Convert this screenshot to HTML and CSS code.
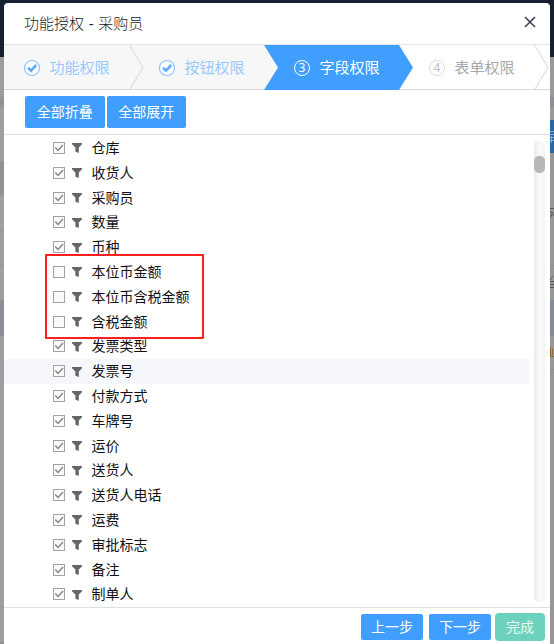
FILE: index.html
```html
<!DOCTYPE html>
<html lang="zh-CN">
<head>
    <meta charset="UTF-8">
    <meta name="viewport" content="width=device-width, initial-scale=1.0">
    <title>功能授权</title>
    <link rel="stylesheet" href="styles.css">
</head>
<body>
    <div class="backdrop">
        <div class="strip strip-left"></div>
        <div class="strip strip-right">
            <svg class="bit bit-button" width="4" height="14" viewBox="0 0 4 14"><path d="M0 1.5H4M0 4.5H4M0 7.5H4M0 10.5H4M1.5 6V13"/></svg>
            <svg class="bit bit-row" width="4" height="12" viewBox="0 0 4 12"><path d="M0 1.5H4M0 4L4 9M3 5L0 11"/></svg>
            <svg class="bit bit-edit" width="4" height="12" viewBox="0 0 4 12"><path d="M0 4L3 0M0 5.5H4M0 8.5H4M0 11.5H4"/></svg>
            <svg class="bit bit-more" width="4" height="10" viewBox="0 0 4 10"><path d="M0.5 0V10M0 9.5H4M2.5 2V8"/></svg>
        </div>
    </div>

    <div class="dialog">
        <header class="dialog-header">
            <h1>功能授权 - 采购员</h1>
            <button class="close" aria-label="关闭">
                <svg width="12" height="12" viewBox="0 0 12 12"><path d="M1 1L11 11M11 1L1 11"/></svg>
            </button>
        </header>

        <nav class="steps">
            <div class="step done first">
                <svg class="mark" width="18" height="18" viewBox="0 0 18 18"><circle cx="9" cy="9" r="7.5"/><path d="M5 8.8L8 11.6L13.2 6"/></svg>
                <span>功能权限</span>
                <svg class="arrow" width="15" height="45" viewBox="0 0 15 45"><path d="M0.5 0L14 22.5L0.5 45"/></svg>
            </div>
            <div class="step done before-active">
                <svg class="mark" width="18" height="18" viewBox="0 0 18 18"><circle cx="9" cy="9" r="7.5"/><path d="M5 8.8L8 11.6L13.2 6"/></svg>
                <span>按钮权限</span>
            </div>
            <div class="step active">
                <b class="num">3</b>
                <span>字段权限</span>
            </div>
            <div class="step todo">
                <b class="num">4</b>
                <span>表单权限</span>
                <svg class="arrow" width="15" height="45" viewBox="0 0 15 45"><path d="M0.5 0L14 22.5L0.5 45"/></svg>
            </div>
        </nav>

        <div class="toolbar">
            <button class="btn">全部折叠</button>
            <button class="btn">全部展开</button>
        </div>

        <div class="content">
            <ul class="fields" id="fields"></ul>
            <div class="scrollbar"><div class="thumb"></div></div>
            <div class="highlight"></div>
        </div>

        <footer class="dialog-footer">
            <button class="btn">上一步</button>
            <button class="btn">下一步</button>
            <button class="btn finish">完成</button>
        </footer>
    </div>

    <script src="fields.js"></script>
</body>
</html>
```

FILE: styles.css
```css
* {
    box-sizing: border-box;
}

body {
    margin: 0;
    height: 644px;
    overflow: hidden;
    padding: 3px 4px 0;
    font-family: "Liberation Sans", "Noto Sans CJK SC", sans-serif;
    font-size: 14px;
    color: #111;
}

button {
    font-family: inherit;
    border: none;
    padding: 0;
    cursor: pointer;
}

/* page behind the dialog */
.backdrop {
    position: absolute;
    top: 0;
    left: 0;
    width: 554px;
    height: 644px;
    z-index: -1;
    overflow: hidden;
    display: flex;
    justify-content: space-between;
    background: linear-gradient(#172030 57px, #9c9b99 57px);
}

.strip {
    position: relative;
    width: 12px;
}

.strip-left {
    background: linear-gradient(#172030 57px, #9f9e9c 57px, #9f9e9c 97px, #939396 97px, #939396 107px, #9f9e9c 107px, #9f9e9c 161px, #929295 161px, #929295 195px, #9f9e9c 195px, #9f9e9c 230px, #929292 230px, #929292 231px, #9f9e9c 231px, #9f9e9c 265px, #929292 265px, #929292 266px, #9f9e9c 266px, #9f9e9c 300px, #8a8f99 300px, #8a8f99 336px, #9f9e9c 336px, #9f9e9c 606px, #929292 606px, #929292 607px, #9f9e9c 607px, #9f9e9c 641px, #929292 641px);
}

.strip-right {
    background: linear-gradient(#172030 57px, #999 57px, #999 97px, #8f9093 97px, #8f9093 107px, #999 107px, #999 120px, #2866a8 120px, #2866a8 153px, #979797 153px, #979797 265px, #8c8c8c 265px, #8c8c8c 266px, #979797 266px, #979797 300px, #868c96 300px, #868c96 336px, #979797 336px, #979797 369px, #8c8c8c 369px, #8c8c8c 370px, #979797 370px);
}

.bit {
    position: absolute;
    right: 0;
    fill: none;
    stroke: #555;
}

.bit-button {
    top: 130px;
    stroke: #8fa6cc;
}

.bit-row {
    top: 207px;
}

.bit-edit {
    top: 276px;
}

.bit-more {
    top: 347px;
    stroke: #8b6534;
}

.dialog {
    width: 546px;
    height: 641px;
    display: flex;
    flex-direction: column;
    background: #fff;
    border-radius: 4px 4px 0 0;
}

.dialog-header {
    height: 42px;
    display: flex;
    align-items: center;
    justify-content: space-between;
    padding: 0 14px 0 20px;
    border-bottom: 1px solid #e4e6ea;
}

.dialog-header h1 {
    margin: 0;
    font-size: 15px;
    font-weight: 300;
    line-height: 22px;
    word-spacing: 0.5px;
    color: #222;
}

.close {
    width: 12px;
    height: 12px;
    background: none;
    margin-top: -3px;
}

.close svg {
    display: block;
    fill: none;
    stroke: #3d4050;
    stroke-width: 1.6;
}

/* steps */
.steps {
    height: 45px;
    display: flex;
    box-shadow: inset 0 -1px #d8dadd;
}

.step {
    position: relative;
    width: 135px;
    display: flex;
    align-items: center;
    gap: 8.5px;
    padding-left: 29px;
    font-size: 15px;
    line-height: 22px;
}

.step.first {
    width: 125px;
    padding-left: 19px;
}

.step.done {
    background: #f7f7f7;
    box-shadow: inset 0 -1px #d8dadd;
    color: #98c9ff;
}

.mark {
    fill: #fff;
    stroke: #8cc3fb;
    stroke-width: 1.2;
}

.mark path {
    fill: none;
    stroke: #5facf8;
    stroke-width: 2.6;
}

.arrow {
    position: absolute;
    right: -15px;
    top: 0;
    z-index: 1;
    fill: none;
    stroke: #d3d4d6;
}

/* grey shows through the notch of the blue arrow */
.step.before-active::after {
    content: "";
    position: absolute;
    left: 100%;
    top: 0;
    width: 14px;
    height: 44px;
    background: #f7f7f7;
}

.step.active {
    z-index: 1;
    width: 149px;
    margin-right: -14px;
    color: #fff;
    background: #409eff;
    clip-path: polygon(0 0, 135px 0, 100% 50%, 135px 100%, 0 100%, 14px 50%);
}

.num {
    width: 16px;
    height: 16px;
    margin: 0 1px;
    border: 1px solid #fff;
    border-radius: 50%;
    font-family: "Noto Sans", sans-serif;
    font-size: 12px;
    font-weight: normal;
    line-height: 14px;
    text-align: center;
}

.step.todo {
    color: #a8a8a8;
}

.todo .num {
    border-color: #dcdcdc;
    color: #bbb;
}

.btn {
    height: 26px;
    width: 62px;
    border-radius: 2px;
    background: #409eff;
    color: #fff;
    font-size: 14px;
    line-height: 20px;
}

.toolbar {
    height: 45px;
    display: flex;
    gap: 2px;
    padding: 6px 21px 0;
    border-bottom: 1px solid #dcdfe8;
}

.toolbar .btn {
    width: 79.5px;
    height: 32px;
}

/* field list */
.content {
    position: relative;
    height: 473px;
    display: flex;
    justify-content: space-between;
    border-bottom: 1px solid #dfe0e2;
}

.fields {
    width: 525px;
    margin: 0;
    padding: 0.6px 0 0;
    list-style: none;
}

.fields li {
    height: 24.8px;
    display: flex;
    align-items: center;
    padding-left: 49.4px;
    line-height: 20px;
}

.fields li.hover {
    background: #f5f7fa;
}

.check {
    width: 12px;
    height: 12px;
    fill: #fafafa;
    stroke: #a2a2a2;
}

.check path {
    fill: none;
    stroke: #858585;
    stroke-width: 1.4;
}

.filter {
    width: 10px;
    height: 10px;
    margin: 1px 9px 0 7px;
    fill: #666;
}

.scrollbar {
    width: 11px;
    height: 462px;
    margin: 5px 5px 0 0;
    padding-top: 16px;
    border-radius: 6px;
    background: linear-gradient(90deg, #ebebeb, #fafafa 60%, #f3f3f3);
}

.thumb {
    height: 17px;
    border-radius: 5px;
    background: #b7b8ba;
}

.highlight {
    position: absolute;
    left: 41px;
    top: 119px;
    width: 159px;
    height: 85px;
    border: 2px solid #fa1e1e;
    border-radius: 1px;
}

.dialog-footer {
    flex: 1;
    display: flex;
    align-items: flex-start;
    justify-content: flex-end;
    gap: 6px;
    padding: 6px 5px 0;
}

.dialog-footer .finish {
    width: 50px;
    height: 28px;
    margin: -1px 0 0 -2px;
    border-radius: 4px;
    background: #6dd2bd;
    color: #e7f8f4;
}
```

FILE: fields.js
```javascript
var fields = [
    ["仓库", true], ["收货人", true], ["采购员", true], ["数量", true], ["币种", true],
    ["本位币金额", false], ["本位币含税金额", false], ["含税金额", false],
    ["发票类型", true], ["发票号", true], ["付款方式", true], ["车牌号", true],
    ["运价", true], ["送货人", true], ["送货人电话", true], ["运费", true],
    ["审批标志", true], ["备注", true], ["制单人", true]
];

var list = document.getElementById("fields");

fields.forEach(function (field) {
    var item = document.createElement("li");
    if (field[0] === "发票号") {
        item.className = "hover";
    }
    var tick = field[1] ? '<path d="M2.3 5.6L5 8.4L10 3"/>' : "";
    item.innerHTML =
        '<svg class="check" viewBox="0 0 12 12"><rect x="0.5" y="0.5" width="11" height="11"/>' + tick + "</svg>" +
        '<svg class="filter" viewBox="0 0 10 10"><path d="M0 0H10V1.2L6.8 4.5V10L3.4 8.8V4.5L0 1.2Z"/></svg>' +
        "<span>" + field[0] + "</span>";
    list.appendChild(item);
});
```
